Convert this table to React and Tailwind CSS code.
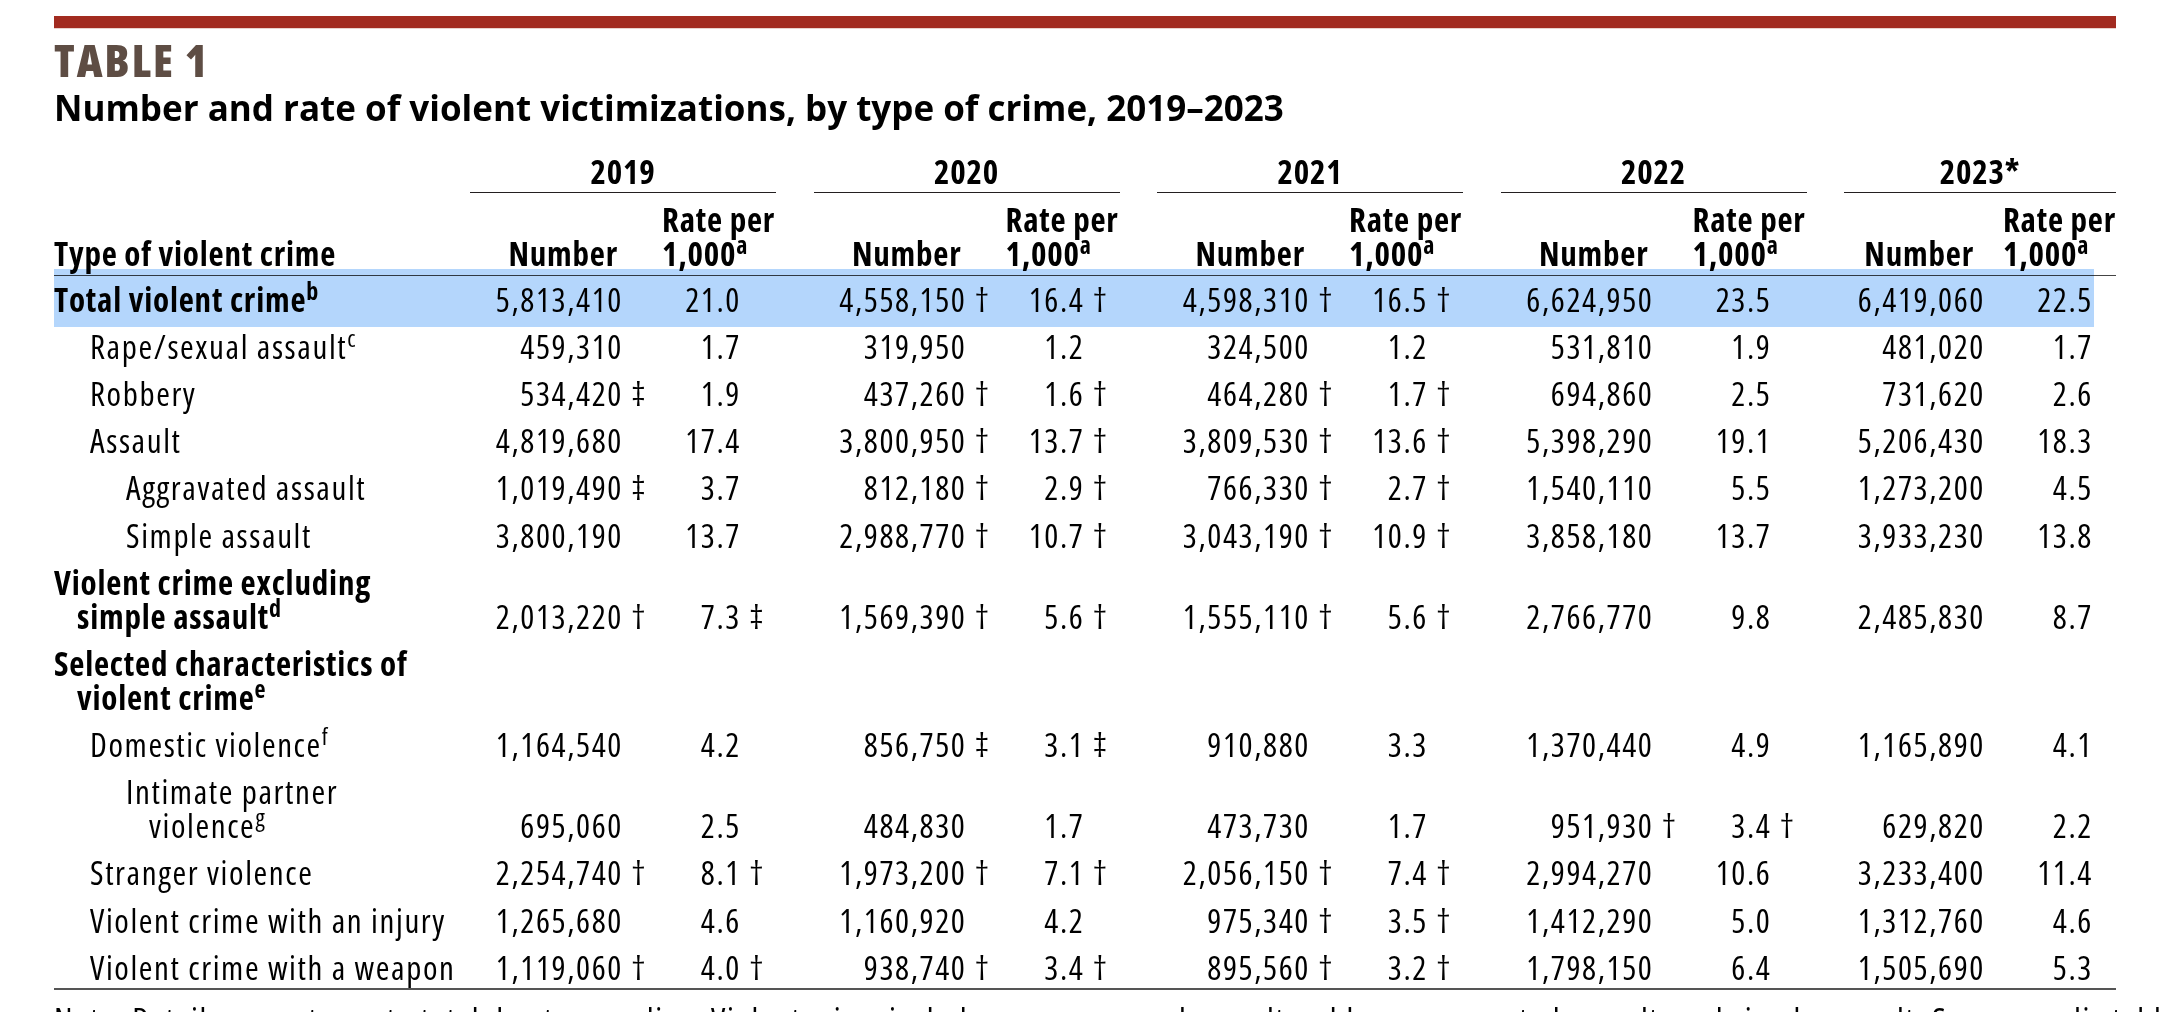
import React from 'react';

const REG = "font-normal font-stretch-condensed tracking-[1.6px]";
const BOLD = "font-bold font-stretch-condensed tracking-[0.8px]";

const years = ['2019', '2020', '2021', '2022', '2023*'];

const rows = [
  { l: ['Total violent crime'], sup: 'b', lvl: 0, b: true, hl: true,
    v: ['5,813,410', '21.0', '4,558,150 †', '16.4 †', '4,598,310 †', '16.5 †', '6,624,950', '23.5', '6,419,060', '22.5'] },
  { l: ['Rape/sexual assault'], sup: 'c', lvl: 1,
    v: ['459,310', '1.7', '319,950', '1.2', '324,500', '1.2', '531,810', '1.9', '481,020', '1.7'] },
  { l: ['Robbery'], lvl: 1,
    v: ['534,420 ‡', '1.9', '437,260 †', '1.6 †', '464,280 †', '1.7 †', '694,860', '2.5', '731,620', '2.6'] },
  { l: ['Assault'], lvl: 1,
    v: ['4,819,680', '17.4', '3,800,950 †', '13.7 †', '3,809,530 †', '13.6 †', '5,398,290', '19.1', '5,206,430', '18.3'] },
  { l: ['Aggravated assault'], lvl: 2,
    v: ['1,019,490 ‡', '3.7', '812,180 †', '2.9 †', '766,330 †', '2.7 †', '1,540,110', '5.5', '1,273,200', '4.5'] },
  { l: ['Simple assault'], lvl: 2,
    v: ['3,800,190', '13.7', '2,988,770 †', '10.7 †', '3,043,190 †', '10.9 †', '3,858,180', '13.7', '3,933,230', '13.8'] },
  { l: ['Violent crime excluding', 'simple assault'], sup: 'd', lvl: 0, b: true,
    v: ['2,013,220 †', '7.3 ‡', '1,569,390 †', '5.6 †', '1,555,110 †', '5.6 †', '2,766,770', '9.8', '2,485,830', '8.7'] },
  { l: ['Selected characteristics of', 'violent crime'], sup: 'e', lvl: 0, b: true, v: [] },
  { l: ['Domestic violence'], sup: 'f', lvl: 1,
    v: ['1,164,540', '4.2', '856,750 ‡', '3.1 ‡', '910,880', '3.3', '1,370,440', '4.9', '1,165,890', '4.1'] },
  { l: ['Intimate partner', 'violence'], sup: 'g', lvl: 2,
    v: ['695,060', '2.5', '484,830', '1.7', '473,730', '1.7', '951,930 †', '3.4 †', '629,820', '2.2'] },
  { l: ['Stranger violence'], lvl: 1,
    v: ['2,254,740 †', '8.1 †', '1,973,200 †', '7.1 †', '2,056,150 †', '7.4 †', '2,994,270', '10.6', '3,233,400', '11.4'] },
  { l: ['Violent crime with an injury'], lvl: 1,
    v: ['1,265,680', '4.6', '1,160,920', '4.2', '975,340 †', '3.5 †', '1,412,290', '5.0', '1,312,760', '4.6'] },
  { l: ['Violent crime with a weapon'], lvl: 1, last: true,
    v: ['1,119,060 †', '4.0 †', '938,740 †', '3.4 †', '895,560 †', '3.2 †', '1,798,150', '6.4', '1,505,690', '5.3'] },
];

const indent = ['pl-0', 'pl-[36px]', 'pl-[72px]'];

const Sup = ({ children }) => (
  <span className="relative -top-[12px] text-[24px] leading-none">{children}</span>
);

const split = (s) => {
  const [n, m] = (s || '').split(' ');
  return [n || '', m || ''];
};

const YearCells = ({ v, i }) => {
  const [num, nm] = split(v[i * 2]);
  const [rate, rm] = split(v[i * 2 + 1]);
  if (i === 4) {
    return (
      <div className="flex w-[272px] shrink-0">
        <div className="w-[141px] text-right">{num}</div>
        <div className="w-[19px]" />
        <div className="w-[89px] text-right">{rate}</div>
      </div>
    );
  }
  return (
    <div className="flex w-[306px] shrink-0">
      <div className="w-[153px] text-right">{num}</div>
      <div className="w-[24px] pl-[8px]">{nm}</div>
      <div className="w-[15px]" />
      <div className="w-[79px] text-right">{rate}</div>
      <div className="w-[24px] pl-[8px]">{rm}</div>
    </div>
  );
};

const Row = ({ r }) => (
  <div className={`relative flex items-end pt-[6.6px] ${r.last ? 'pb-[3px]' : 'pb-[6.6px]'}`}>
    <div className={`w-[416px] shrink-0 whitespace-nowrap ${indent[r.lvl]} ${r.b ? BOLD : ''}`}>
      {r.l.map((t, k) => (
        <div key={t} className={k > 0 ? 'pl-[23px]' : ''}>
          {t}
          {k === r.l.length - 1 && r.sup ? <Sup>{r.sup}</Sup> : null}
        </div>
      ))}
    </div>
    <div className="flex gap-[37.5px]">
      {years.map((y, i) => (
        <YearCells key={y} v={r.v} i={i} />
      ))}
    </div>
    {r.hl ? (
      <div className="absolute -top-[7px] -bottom-[4px] left-0 right-[22px] bg-[#b4d6fc] mix-blend-multiply" />
    ) : null}
  </div>
);

export default function App() {
  return (
    <div className="w-[2160px] h-[1012px] overflow-hidden bg-white pl-[54px] pr-[44px] pt-[16px] font-['Open_Sans',sans-serif] text-black">
      <div className="h-[12px] bg-[#a22b20]" />
      <div className="h-[1px] bg-[#ead2cd]" />
      <div className="mt-[8px] text-[45px] leading-[45px] font-extrabold font-stretch-condensed tracking-[2px] text-[#5e4d44]">
        TABLE 1
      </div>
      <div className="mt-[8px] text-[35px] leading-[35px] font-bold whitespace-nowrap">
        Number and rate of violent victimizations, by type of crime, 2019–2023
      </div>

      <div className={`mt-[30px] text-[33px] leading-[34px] ${REG}`}>
        <div className={`flex ${BOLD}`}>
          <div className="w-[416px] shrink-0" />
          <div className="flex gap-[37.5px]">
            {years.map((y, i) => (
              <div
                key={y}
                className={`${i === 4 ? 'w-[272px]' : 'w-[306px]'} shrink-0 text-center pb-[3px] border-b-[1.5px] border-[#231f20]`}
              >
                {y}
              </div>
            ))}
          </div>
        </div>

        <div className={`flex items-end pt-[9.5px] pb-[4.5px] border-b-[1.5px] border-[#444] ${BOLD}`}>
          <div className="w-[416px] shrink-0 whitespace-nowrap">Type of violent crime</div>
          <div className="flex gap-[37.5px] items-end">
            {years.map((y, i) => (
              <div key={y} className={`flex items-end shrink-0 ${i === 4 ? 'w-[272px]' : 'w-[306px]'}`}>
                <div className={`${i === 4 ? 'w-[130px]' : 'w-[148px]'} text-right`}>Number</div>
                <div className={i === 4 ? 'w-[29px]' : 'w-[44px]'} />
                <div className="whitespace-nowrap">
                  <div>Rate per</div>
                  <div>
                    1,000<Sup>a</Sup>
                  </div>
                </div>
              </div>
            ))}
          </div>
        </div>

        {rows.map((r) => (
          <Row key={r.l[0]} r={r} />
        ))}

        <div className="border-t-[2px] border-[#555]" />
        <div className="mt-[13px] whitespace-nowrap">
          Note: Detail may not sum to total due to rounding. Violent crime includes rape or sexual assault, robbery, aggravated assault, and simple assault. See appendix table 2 for standard errors.
        </div>
      </div>
    </div>
  );
}
